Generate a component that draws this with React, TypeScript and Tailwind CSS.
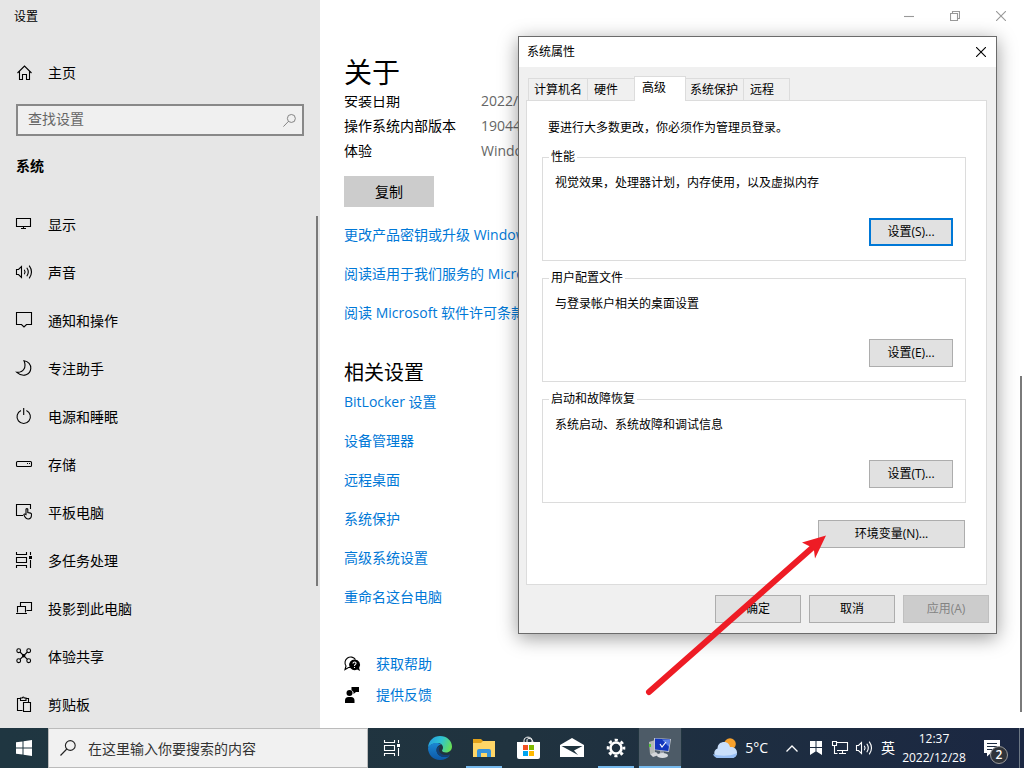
import type { ReactNode } from "react";

const line = { fill: "none", stroke: "currentColor", strokeWidth: 1.1 };

function Glyph({ children, size = 16 }: { children: ReactNode; size?: number }) {
  return (
    <svg width={size} height={size} viewBox="0 0 16 16" className="shrink-0 overflow-visible" aria-hidden="true" {...line}>
      {children}
    </svg>
  );
}

const Home = () => (
  <Glyph>
    <path d="M1.5 8 8.500 1l7 7M3.500 6.500v8h3v-5h4v5h3v-8" />
  </Glyph>
);

const Display = () => (
  <Glyph>
    <path d="M.5 2.5h14v8H.5zM7.5 10.5v2M5 12.5h5" />
  </Glyph>
);

const Sound = () => (
  <Glyph>
    <path d="M.5 5.5h2L5.5 2.5v11l-3-3h-2z" />
    <path d="M8.3 5.8q1.6 2.2 0 4.4M10.8 3.8q3 4.2 0 8.4M13.2 1.6q4.6 6.4 0 12.8" />
  </Glyph>
);

const Notify = () => (
  <Glyph>
    <path d="M.5.5h15v12h-5L8 15l-2.5-2.5h-5z" />
  </Glyph>
);

const Moon = () => (
  <Glyph>
    <path d="M8 .7C12.4 1.2 15 4.6 14.8 8.4 14.4 14.4 7.4 18 .8 12.3 7 12.8 11 7.6 8 .7z" />
  </Glyph>
);

const Power = () => (
  <Glyph>
    <path d="M5 2.6a6.7 6.7 0 1 0 5.4 0M7.7 0v7" />
  </Glyph>
);

const Storage = () => (
  <Glyph>
    <rect x=".5" y="5.5" width="15" height="5" rx="1" />
    <path d="M11 7.5h1M13 7.5h1" />
  </Glyph>
);

const Tablet = () => (
  <Glyph>
    <path d="M7 11.5H.5v-11h14V5" />
    <path d="M10 10.5V5.2q.9-1.2 1.8 0v3.3l2.8.6q1 .3.9 1.5c0 2.8-1.2 4.4-3.2 4.4-2.2 0-3.2-1.300-4.5-4.200q.6-1.400 2.200-.3z" />
  </Glyph>
);

const TaskView = () => (
  <Glyph>
    <path d="M.5 0v2.5h10V0M.5 16v-2.500h10V16M.5 5.500h10v5H.5zM14.500 0v3M14.500 8v8" />
    <path d="M13 4h3v3h-3z" fill="currentColor" stroke="none" />
  </Glyph>
);

const Project = () => (
  <Glyph>
    <path d="M4.500 6.500v-4h11v8h-5M1.500 12.500v-6h8v6M0 13.500h11" />
  </Glyph>
);

const Share = () => (
  <Glyph>
    <circle cx="2.700" cy="2.700" r="1.900" />
    <circle cx="12.700" cy="2.700" r="1.900" />
    <circle cx="2.700" cy="12.700" r="1.900" />
    <circle cx="12.700" cy="12.700" r="1.900" />
    <path d="m4 4 7.400 7.400M11.400 4 4 11.400" />
    <circle cx="7.700" cy="7.700" r="1.700" fill="currentColor" stroke="none" />
  </Glyph>
);

const Clipboard = () => (
  <Glyph>
    <path d="M6.500 14.500H1.500v-12H4M10 2.500h2.500V6M4.500 4.500V2h1.700a1 1 0 0 1 2 0H10v2.500zM7.500 6.500h7v9h-7z" />
  </Glyph>
);

const Magnifier = ({ size = 16 }: { size?: number }) => (
  <Glyph size={size}>
    <circle cx="10.300" cy="5.500" r="4.900" />
    <path d="M6.800 9 .5 15.500" />
  </Glyph>
);

const HelpIcon = () => (
  <Glyph>
    <path d="M6 11.500H4.500L1 13.500l1-3.500A5.500 5.500 0 1 1 11.500 3.500" />
    <path d="M10.500 3.500a5.300 5.300 0 1 0 2.600 9.900l3 1.600-1-3.100a5.300 5.300 0 0 0-4.600-8.400z" fill="currentColor" stroke="none" />
    <path d="M9 7.500c0-2 3.300-1.800 3 0-.2 1-1.500 1-1.500 2.400M10.500 11v1" stroke="#fff" />
  </Glyph>
);

const FeedbackIcon = () => (
  <Glyph>
    <g fill="currentColor" stroke="none">
      <circle cx="5.500" cy="6" r="3" />
      <path d="M1 16v-2.500A3.500 3.500 0 0 1 4.500 10H7a3.500 3.500 0 0 1 3.500 3.500V16zM7.500 0H15v5h-3l-2.500 2V5l-2-2z" />
    </g>
  </Glyph>
);

const navItems = [
  { label: "显示", icon: <Display /> },
  { label: "声音", icon: <Sound /> },
  { label: "通知和操作", icon: <Notify /> },
  { label: "专注助手", icon: <Moon /> },
  { label: "电源和睡眠", icon: <Power /> },
  { label: "存储", icon: <Storage /> },
  { label: "平板电脑", icon: <Tablet /> },
  { label: "多任务处理", icon: <TaskView /> },
  { label: "投影到此电脑", icon: <Project /> },
  { label: "体验共享", icon: <Share /> },
  { label: "剪贴板", icon: <Clipboard /> },
];

function Sidebar() {
  return (
    <aside className="relative w-80 shrink-0 bg-[#e6e6e6]">
      <div className="flex h-[34px] items-center pl-3.5 text-xs">设置</div>
      <a href="#" className="mt-[19px] flex h-10 items-center gap-4 pl-4">
        <Home />
        主页
      </a>
      <label className="mx-4 mt-[11px] flex h-8 items-center border-2 border-[#888] bg-[#f0f0f0] pr-1.5 text-[#777]">
        <input
          type="text"
          aria-label="查找设置"
          placeholder="查找设置"
          className="w-full min-w-0 bg-transparent pb-0.5 pl-2.5 outline-none placeholder:text-[#666]"
        />
        <Magnifier size={13} />
      </label>
      <h2 className="mt-3.5 flex h-8 items-center pl-4 font-bold">系统</h2>
      <nav className="mt-4.5">
        {navItems.map((item) => (
          <a key={item.label} href="#" className="flex h-12 items-center gap-4 pl-4">
            {item.icon}
            <span className="pt-0.5">{item.label}</span>
          </a>
        ))}
      </nav>
      {/* scroll thumb */}
      <div className="absolute top-54 right-0.5 h-[370px] w-0.5 bg-[#7a7a7a]" />
    </aside>
  );
}

const licenseLinks = [
  "更改产品密钥或升级 Windows",
  "阅读适用于我们服务的 Micros",
  "阅读 Microsoft 软件许可条款",
];

const relatedLinks = ["BitLocker 设置", "设备管理器", "远程桌面", "系统保护", "高级系统设置", "重命名这台电脑"];

function LinkRow({ children }: { children: ReactNode }) {
  return (
    <li className="flex h-[39px] items-center">
      <a href="#" className="whitespace-nowrap text-[#0078d7]">{children}</a>
    </li>
  );
}

function About() {
  return (
    <main className="relative min-w-0 flex-1 overflow-hidden bg-white pl-6">
      <div className="flex h-8 items-center justify-end text-[#999]">
        <button aria-label="最小化" className="flex w-[46px] justify-center">
          <svg width="10" height="10" {...line}><path d="M0 5.500h10" /></svg>
        </button>
        <button aria-label="还原" className="flex w-[46px] justify-center">
          <svg width="10" height="10" {...line}><path d="M.5 2.500h7v7h-7zM2.500 2.500v-2h7v7h-2" /></svg>
        </button>
        <button aria-label="关闭" className="flex w-[46px] justify-center">
          <svg width="10" height="10" {...line}><path d="m0 0 10 10M10 0 0 10" /></svg>
        </button>
      </div>

      <h1 className="mt-[23px] h-[41px] text-[28px] leading-[34px]">关于</h1>
      {/* the first row is scrolled partly under the heading */}
      <dl className="grid grid-cols-[137px_1fr] overflow-hidden leading-[25px] whitespace-nowrap">
        <dt className="flex h-[17px] items-end">安装日期</dt>
        <dd className="flex h-[17px] items-end text-[#666]">2022/1</dd>
        <dt>操作系统内部版本</dt>
        <dd className="text-[#666]">19044.</dd>
        <dt>体验</dt>
        <dd className="text-[#666]">Windows</dd>
      </dl>
      <button className="mt-[13px] flex h-[31px] w-[90px] items-center justify-center bg-[#ccc]">复制</button>

      <ul className="mt-2">
        {licenseLinks.map((text) => <LinkRow key={text}>{text}</LinkRow>)}
      </ul>

      <h2 className="mt-[30px] h-5 text-xl leading-[22px]">相关设置</h2>
      <ul>
        {relatedLinks.map((text) => <LinkRow key={text}>{text}</LinkRow>)}
      </ul>

      <div className="mt-8">
        <a href="#" className="flex h-[31px] items-center gap-4">
          <HelpIcon />
          <span className="text-[#0078d7]">获取帮助</span>
        </a>
        <a href="#" className="flex h-[31px] items-center gap-4">
          <FeedbackIcon />
          <span className="text-[#0078d7]">提供反馈</span>
        </a>
      </div>
      <div className="absolute top-[376px] right-0.5 bottom-4 w-0.5 bg-[#7a7a7a]" />
    </main>
  );
}

const groups = [
  { title: "性能", text: "视觉效果，处理器计划，内存使用，以及虚拟内存", button: "设置(S)...", focused: true },
  { title: "用户配置文件", text: "与登录帐户相关的桌面设置", button: "设置(E)...", focused: false },
  { title: "启动和故障恢复", text: "系统启动、系统故障和调试信息", button: "设置(T)...", focused: false },
];

function SystemProperties() {
  return (
    <section
      role="dialog"
      aria-label="系统属性"
      className="absolute top-9 right-[27px] w-[479px] border border-[#6b6b6b] bg-[#f0f0f0] text-xs leading-[18px] shadow-[0_4px_18px_rgba(0,0,0,0.4)]"
    >
      <header className="flex h-[30px] items-center justify-between bg-white pr-2.5 pl-2">
        <span>系统属性</span>
        <button aria-label="关闭">
          <svg width="10" height="10" {...line}><path d="m0 0 10 10M10 0 0 10" /></svg>
        </button>
      </header>

      <div role="tablist" className="mt-[9px] flex h-6 items-end pl-[9px]">
        <button role="tab" className="h-[22px] w-[59px] border-t border-l border-[#dcdcdc] pl-[5px] text-left">计算机名</button>
        <button role="tab" className="h-[22px] w-[47px] border-t border-l border-[#dcdcdc] pl-1.5 text-left">硬件</button>
        <button role="tab" aria-selected="true" className="relative -mb-px h-[25px] w-[52px] border-x border-t border-[#dcdcdc] bg-white pb-0.5 pl-[7px] text-left">高级</button>
        <button role="tab" className="h-[22px] w-[57px] border-t border-[#dcdcdc] pl-1 text-left">系统保护</button>
        <button role="tab" className="h-[22px] w-[47px] border-x border-t border-[#dcdcdc] pl-1.5 text-left">远程</button>
      </div>

      <div role="tabpanel" className="mr-[9px] ml-[7px] border border-[#dcdcdc] bg-white pt-[18px] pr-5 pb-9 pl-[15px]">
        <p className="mb-[11px] pl-1.5">要进行大多数更改，你必须作为管理员登录。</p>
        <div className="flex flex-col gap-2">
          {groups.map((group) => (
            <fieldset key={group.title} className="border border-[#dcdcdc] pr-3 pb-3.5 pl-1.5">
              <legend className="px-0.5">{group.title}</legend>
              <p className="mt-2 pl-1.5">{group.text}</p>
              <button
                className={`mt-[26px] ml-auto block h-7 w-21 bg-[#e1e1e1] ${
                  group.focused ? "border-2 border-[#0078d7]" : "border border-[#adadad]"
                }`}
              >
                {group.button}
              </button>
            </fieldset>
          ))}
        </div>
        <button className="mt-[17px] mr-px ml-auto block h-7 w-[147px] border border-[#adadad] bg-[#e1e1e1]">环境变量(N)...</button>
      </div>

      <footer className="flex justify-end gap-2 pt-2.5 pr-[7px] pb-2.5">
        <button className="h-7 w-[86px] border border-[#adadad] bg-[#e1e1e1]">确定</button>
        <button className="h-7 w-[86px] border border-[#adadad] bg-[#e1e1e1]">取消</button>
        <button disabled className="h-7 w-[86px] border border-[#bfbfbf] bg-[#ccc] text-[#838383]">应用(A)</button>
      </footer>

      {/* pointer to the environment variables button */}
      <svg className="pointer-events-none absolute top-[493px] left-[121px]" width="192" height="170" aria-hidden="true">
        <path d="M9 162 172 18" stroke="#ee1c25" strokeWidth="6" strokeLinecap="round" />
        <path d="M186 5.500 162 12.500l8 4 4 4 1 8z" fill="#ee1c25" />
      </svg>
    </section>
  );
}

const EdgeIcon = () => (
  <svg width="24" height="24" viewBox="0 0 24 24" aria-hidden="true">
    <defs>
      <linearGradient id="edgeTop" x1="0" x2="1" y1=".3" y2=".6">
        <stop stopColor="#269fe0" />
        <stop offset=".5" stopColor="#2fc3d2" />
        <stop offset="1" stopColor="#69e053" />
      </linearGradient>
      <linearGradient id="edgeLow" x1="0" x2="0" y1="0" y2="1">
        <stop stopColor="#1b87d3" />
        <stop offset="1" stopColor="#0c58a8" />
      </linearGradient>
    </defs>
    <path d="M0 11.500C.6 4.500 5.500 0 12 0c7 0 12 5 12 10.500 0 3.500-2.500 6-6 6-2.200 0-4-1-4-2 0-.7 1-1.200 1-3C15 9 12.600 7 9.500 7 5 7 1.200 9.500 0 11.500z" fill="url(#edgeTop)" />
    <path d="M0 12c1-3 4.500-5 8.500-5 2 0 3.500.7 4.500 1.600-3 .4-4.500 2.900-4.500 5.400 0 4 3.500 7 8 7 2.500 0 4.300-.8 5.500-1.700C20 22.500 16 24 12 24 5 24 0 18.500 0 12z" fill="url(#edgeLow)" />
    <path d="M8.500 14c0 4 3.500 7 8 7 2.500 0 4.300-.8 5.500-1.700.4-.8-.2-1-.8-.7-4.200 1.600-10.700-.6-10.200-5.600.1-1.200.7-2.200 1.500-2.900-2.500.2-4 1.700-4 3.900z" fill="#123f75" />
  </svg>
);

const FolderIcon = () => (
  <svg width="22" height="18" viewBox="0 0 22 18" aria-hidden="true">
    <path d="M0 0h8l2 2h12v16H0z" fill="#e3a21a" />
    <path d="M0 4h8l2-2h12v16H0z" fill="#ffd667" />
    <path d="M4 18v-6q0-2 2-2h10q2 0 2 2v6h-4v-4H8v4z" fill="#3793dc" />
  </svg>
);

const StoreIcon = () => (
  <svg width="24" height="24" viewBox="0 0 24 24" aria-hidden="true">
    <path d="M8 6V4.500C8 0 16 0 16 4.500V6M11 6V4c0-2 5-2.500 6 2" fill="none" stroke="#fff" />
    <path d="M1 6h23v15q0 2-2 2H3q-2 0-2-2z" fill="#fff" />
    <path d="M7 9h5v5H7z" fill="#f25022" />
    <path d="M13 9h5v5h-5z" fill="#7fba00" />
    <path d="M7 15h5v5H7z" fill="#00a4ef" />
    <path d="M13 15h5v5h-5z" fill="#ffb900" />
  </svg>
);

const MailIcon = () => (
  <svg width="24" height="20" viewBox="0 0 24 20" aria-hidden="true">
    <path d="M0 7 12 0l12 7v12H0z" fill="#fff" />
    <path d="M1.500 8h21L14 12.500l4 4.500z" fill="#20343f" />
  </svg>
);

const GearIcon = () => (
  <svg width="20" height="20" viewBox="0 0 20 20" fill="none" stroke="#fff" aria-hidden="true">
    <circle cx="10" cy="10" r="5.500" strokeWidth="2.600" />
    <circle cx="10" cy="10" r="8" strokeWidth="2.600" strokeDasharray="3.140 3.143" strokeDashoffset="1.570" />
  </svg>
);

const ComputerIcon = () => (
  <svg width="24" height="22" viewBox="0 0 24 22" aria-hidden="true">
    <path d="m1 5 6-2v13l-5 1z" fill="#b4b8b6" />
    <path d="M1 7h2v3H1z" fill="#55c936" />
    <path d="m6 1 17 1-2 13-15-2z" fill="#c4c9d4" />
    <path d="m7 1.500 15 1-1.700 11.500-13.300-1.500z" fill="#1236bd" />
    <path d="m14 2.500 8 .3-1.200 7z" fill="#5d83e6" />
    <path d="m12 7 2 3 4-5" fill="none" stroke="#fff" strokeWidth="1.200" />
    <path d="m12 14 4 .5 0 3h-4z" fill="#9fa3ab" />
    <ellipse cx="14.500" cy="18.500" rx="5.500" ry="2.500" fill="#d9dce0" />
    <path d="m2 17 6-2 3 3-6 2z" fill="#d4d6da" />
  </svg>
);

const WeatherIcon = () => (
  <svg width="24" height="20" viewBox="0 0 24 20" aria-hidden="true">
    <circle cx="17" cy="6" r="5.800" fill="#f7a12c" />
    <path d="M5 20a5 5 0 0 1-.5-9.500C4.500 6 8 4 11 4c3.500 0 5.500 2.300 6 5 4-.5 7 2 7 5.500 0 3.200-2.500 5.500-5 5.500z" fill="#c9dffb" />
    <path d="M5 20c-2.500 0-4.500-1.800-5-4 5 2 16 3 24-1-.2 3-2.500 5-5 5z" fill="#98bff5" />
  </svg>
);

const apps = [
  { name: "Microsoft Edge", icon: <EdgeIcon />, open: false, active: false },
  { name: "文件资源管理器", icon: <FolderIcon />, open: true, active: false },
  { name: "Microsoft Store", icon: <StoreIcon />, open: false, active: false },
  { name: "邮件", icon: <MailIcon />, open: false, active: false },
  { name: "设置", icon: <GearIcon />, open: true, active: false },
  { name: "系统属性", icon: <ComputerIcon />, open: true, active: true },
];

function Taskbar() {
  return (
    <footer className="flex h-10 shrink-0 bg-linear-to-r from-[#1f3641] via-[#20333f] to-[#1b2742] text-white">
      <button aria-label="开始" className="flex w-12 items-center justify-center">
        <svg width="16" height="16" viewBox="0 0 16 16" fill="#fff">
          <path d="M0 2.300 6.500 1.400v6.100H0zM7.500 1.200 16 0v7.500H7.500zM0 8.500h6.500v6.100L0 13.700zM7.500 8.500H16V16l-8.500-1.200z" />
        </svg>
      </button>
      <label className="flex w-80 items-center gap-3 border border-[#bbb] bg-[#f1f1f1] pl-[11px] text-[#222]">
        <Magnifier />
        <input
          type="text"
          aria-label="搜索"
          placeholder="在这里输入你要搜索的内容"
          className="w-full min-w-0 bg-transparent pt-0.5 outline-none placeholder:text-[#333]"
        />
      </label>
      <button aria-label="任务视图" className="mr-0.5 flex w-12 items-center justify-center">
        <TaskView />
      </button>
      {apps.map((app) => (
        <button
          key={app.name}
          aria-label={app.name}
          className={`relative flex w-11 items-center justify-center ${app.active ? "border-x border-[#223641] bg-[#4d5b67]" : ""}`}
        >
          {app.icon}
          {app.open && (
            <span className={`absolute bottom-0 h-0.5 bg-[#76b9ed] ${app.active ? "inset-x-0" : "inset-x-1"}`} />
          )}
        </button>
      ))}

      <div className="ml-auto flex">
        <button className="mr-3 flex items-center gap-2 text-sm">
          <WeatherIcon />
          5°C
        </button>
        <button aria-label="显示隐藏的图标" className="flex w-6 items-center justify-center">
          <svg width="12" height="7" fill="none" stroke="#fff" strokeWidth="1.300"><path d="m.5 6.500 5.500-5.500 5.500 5.500" /></svg>
        </button>
        <button aria-label="输入法" className="flex w-6 items-center justify-center">
          <svg width="12" height="14" fill="#fff"><path d="M0 0h5.500v6H0zM6.500 0H12v6H6.500zM0 7h5.500v3.500L0 14zM6.500 7H12v7l-5.500-3.500z" /></svg>
        </button>
        <button aria-label="网络" className="flex w-6 items-center justify-center">
          <Glyph>
            <path d="M5 2.500h10.500v8H5M10.500 10.500v3M7 13.500h7M.5 1.500h4v4h-4zM2.500 5.500v8h3" />
          </Glyph>
        </button>
        <button aria-label="音量" className="flex w-6 items-center justify-center">
          <Sound />
        </button>
        <button className="flex w-6 items-center justify-center">英</button>
        <button className="w-[68px] text-center text-xs leading-[19px] whitespace-nowrap">
          <time>
            12:37
            <br />
            2022/12/28
          </time>
        </button>
        <button aria-label="通知" className="relative flex w-12 items-center justify-center">
          <svg width="18" height="18" aria-hidden="true">
            <path d="M1 1h16v13H8l-4 3.500V14H1z" fill="#fff" />
            <path d="M4 4.500h10M4 7.500h10M4 10.500h6" stroke="#1c2b40" />
          </svg>
          <span className="absolute right-2 bottom-1 size-[18px] rounded-full border border-[#999] bg-[#30343a] text-center text-xs leading-4 font-semibold">2</span>
        </button>
        <button aria-label="显示桌面" className="ml-[3px] w-[5px] border-l border-[#6c7784]" />
      </div>
    </footer>
  );
}

export default function App() {
  return (
    <div className="relative flex min-h-screen flex-col overflow-hidden bg-white font-['Open_Sans','Noto_Sans_CJK_SC',sans-serif] text-sm text-black">
      <div className="flex flex-1">
        <Sidebar />
        <About />
      </div>
      <SystemProperties />
      <Taskbar />
    </div>
  );
}
